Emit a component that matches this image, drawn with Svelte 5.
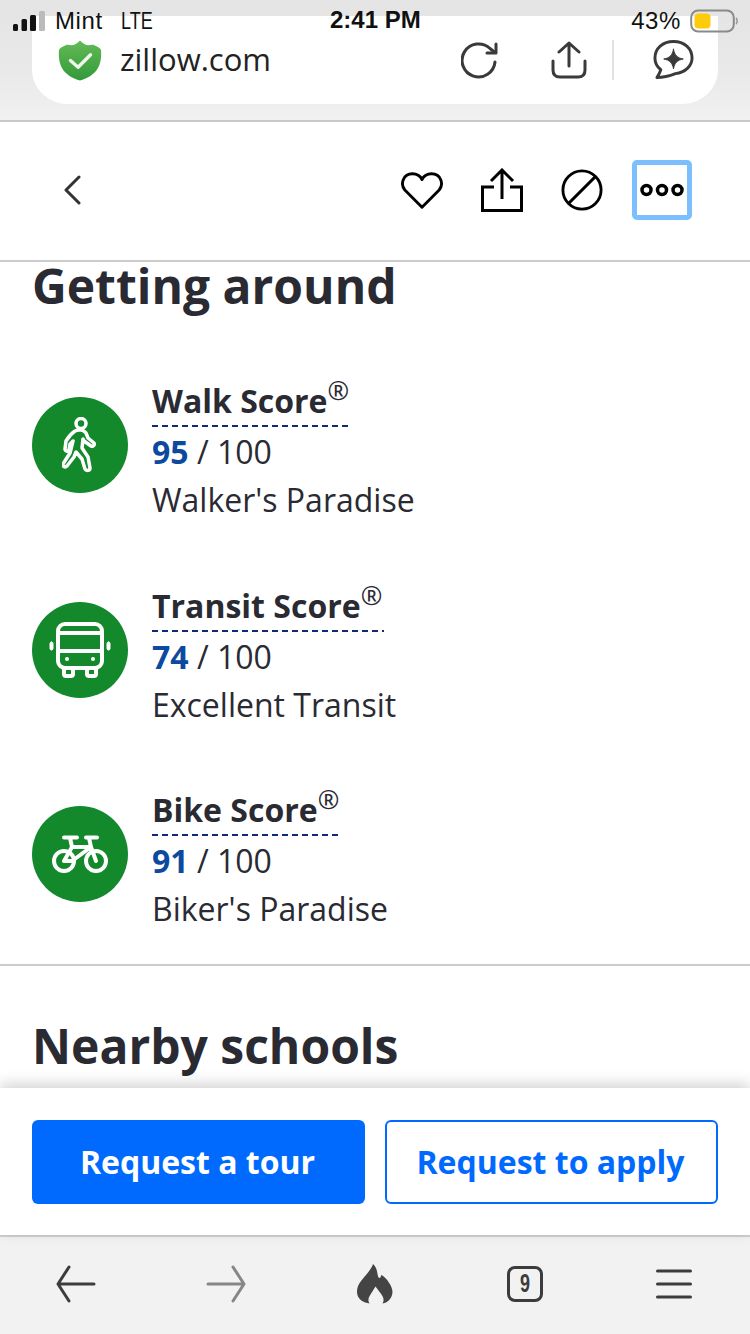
<script>
  const rows = [
    { name: 'Walk Score', score: 95, label: "Walker's Paradise", icon: 'walk' },
    { name: 'Transit Score', score: 74, label: 'Excellent Transit', icon: 'bus' },
    { name: 'Bike Score', score: 91, label: "Biker's Paradise", icon: 'bike' }
  ];
</script>

<div class="page">
  <div class="status">
    <div class="st-left">
      <svg class="signal" width="34" height="22" viewBox="0 0 34 22">
        <rect x="1" y="14" width="5" height="7" rx="1.500" fill="#111" />
        <rect x="9.500" y="9" width="5.500" height="12" rx="1.500" fill="#111" />
        <rect x="18" y="5" width="6" height="16" rx="1.500" fill="#111" />
        <rect x="27" y="1" width="6" height="20" rx="1.500" fill="#bbb" />
      </svg>
      <span class="carrier">Mint</span>
      <span class="lte">LTE</span>
    </div>
    <div class="time">2:41 PM</div>
    <div class="st-right">
      <span>43%</span>
      <svg width="48" height="24" viewBox="0 0 48 24">
        <rect x="1.200" y="1.500" width="42.600" height="21" rx="7" fill="none" stroke="#8a8a8a" stroke-width="2" />
        <rect x="4.500" y="4.500" width="16" height="15" rx="4" fill="#fdcb0a" />
        <path d="M46 9c1.500 1 1.500 5 0 6" fill="none" stroke="#999" stroke-width="1.600" />
      </svg>
    </div>
  </div>

  <header class="browser">
    <div class="pill">
      <svg class="shield" width="44" height="43" viewBox="0 0 46 44">
        <defs>
          <linearGradient id="sh" x1="0" y1="0" x2="0" y2="1">
            <stop offset="0" stop-color="#63bb55" />
            <stop offset="1" stop-color="#33993a" />
          </linearGradient>
        </defs>
        <path d="M23 1c3 3 6 5 9 5 2 0 4-1 6 0 3 1 6 3 7 5 1 15-3 26-22 32C4 37 0 26 1 11c1-2 4-4 7-5 2-1 4 0 6 0 3 0 6-2 9-5z" fill="url(#sh)" />
        <path d="M13 22l8 7 13-13" fill="none" stroke="#f0f7ec" stroke-width="3.500" stroke-linecap="round" stroke-linejoin="round" />
      </svg>
      <span class="domain">zillow.com</span>
      <div class="pill-icons">
        <svg class="reload" width="38" height="38" viewBox="0 0 38 38" fill="none" stroke="#3a3a3a" stroke-width="3" stroke-linecap="round" stroke-linejoin="round">
          <path d="M34 20a16.500 16.500 0 1 1-5-13.500l5 4" />
          <path d="M35 2v9H26" />
        </svg>
        <svg class="upload" width="36" height="38" viewBox="0 0 36 38" fill="none" stroke="#3a3a3a" stroke-width="3" stroke-linecap="round" stroke-linejoin="round">
          <path d="M18 25V2M8 11l10-9 10 9" />
          <path d="M2 20v9q0 7 7 7h18q7 0 7-7v-9" />
        </svg>
        <span class="sep"></span>
        <svg class="spark" width="41" height="42" viewBox="0 0 42 42" fill="none" stroke="#3a3a3a" stroke-width="3" stroke-linecap="round" stroke-linejoin="round">
          <path d="M21 2C10 2 2 9 2 19c0 5 2 9 6 12-1 3-2 5-4 8 7 0 14-2 19-4 10-1 17-8 17-16C40 9 32 2 21 2z" />
          <path d="M21 10c1 6 4 9 10 10-6 1-9 4-10 10-1-6-4-9-10-10 6-1 9-4 10-10z" fill="#3a3a3a" stroke-width="1" />
        </svg>
      </div>
    </div>
  </header>

  <nav class="topnav">
    <svg class="chev" width="20" height="30" viewBox="0 0 20 30" fill="none" stroke="#333" stroke-width="3" stroke-linecap="round" stroke-linejoin="round">
      <path d="M17 2L4 15l13 13" />
    </svg>
    <div class="actions">
      <svg width="42" height="40" viewBox="0 0 44 40" fill="none" stroke="#000" stroke-width="3" stroke-linejoin="round">
        <path d="M22 38L4 20C-1 14 2 3 12 3c4 0 8 2 10 6 2-4 6-6 10-6 10 0 13 11 8 17z" />
      </svg>
      <svg width="42" height="44" viewBox="0 0 42 44" fill="none" stroke="#000" stroke-width="3">
        <path d="M21 31V3M10 13L21 2l11 11" />
        <path d="M13 19H1.500v23.500h39V19H29" />
      </svg>
      <svg width="42" height="44" viewBox="0 0 44 44" fill="none" stroke="#000" stroke-width="3">
        <circle cx="22" cy="22" r="20" />
        <path d="M8 36L36 8" />
      </svg>
      <div class="more">
        <svg width="44" height="14" viewBox="0 0 44 14" fill="none" stroke="#000" stroke-width="3.500">
          <circle cx="6.500" cy="7" r="4.500" />
          <circle cx="22" cy="7" r="4.500" />
          <circle cx="37.500" cy="7" r="4.500" />
        </svg>
      </div>
    </div>
  </nav>

  <main class="content">
    <h2 class="first">Getting around</h2>
    <div class="rows">
      {#each rows as r}
        <div class="row">
          <div class="badge">
            {#if r.icon === 'walk'}
              <svg width="36" height="56" viewBox="0 0 36 56" fill="none" stroke="#fff" stroke-width="3.500" stroke-linejoin="round" stroke-linecap="round">
                <circle cx="19" cy="6.500" r="5" />
                <path d="M13 14c4-2 9-1 11 2l2 5 6 5c1 2-1 4-3 3l-7-5-1-2-1 9 6 9 2 11c0 3-4 3-5 1l-3-10-6-7-2 5-7 9c-2 2-5 0-4-2l7-11 3-12-3 3-1 6c-1 2-4 1-4-1l1-8c3-5 6-8 9-10z" />
              </svg>
            {:else if r.icon === 'bus'}
              <svg width="62" height="56" viewBox="0 0 62 56" fill="none" stroke="#fff" stroke-width="4" stroke-linejoin="round" stroke-linecap="round">
                <rect x="9" y="2" width="44" height="44" rx="7" />
                <path d="M9 11h44M9 29h44" />
                <path d="M15 46v6q0 2 2 2h5q2 0 2-2v-6M38 46v6q0 2 2 2h5q2 0 2-2v-6" />
                <rect x="1" y="20" width="3" height="8" rx="1.500" fill="#fff" stroke-width="1" />
                <rect x="58" y="20" width="3" height="8" rx="1.500" fill="#fff" stroke-width="1" />
                <circle cx="18" cy="37" r="2" fill="#fff" stroke="none" />
                <circle cx="44" cy="37" r="2" fill="#fff" stroke="none" />
              </svg>
            {:else}
              <svg width="56" height="38" viewBox="0 0 56 38" fill="none" stroke="#fff" stroke-width="4" stroke-linejoin="round" stroke-linecap="round">
                <circle cx="12" cy="26" r="10" />
                <circle cx="44" cy="26" r="10" />
                <path d="M12 26l8-14h19l5 14M20 12l-2-9M12 2.500h13M34 2.500h11M39 12l-2-9M20 26l19-14M12 26h8" />
              </svg>
            {/if}
          </div>
          <div class="info">
            <div class="name-wrap"><span class="name">{r.name}<sup>®</sup></span></div>
            <div class="score"><b>{r.score}</b> / 100</div>
            <div class="label">{r.label}</div>
          </div>
        </div>
      {/each}
    </div>
    <hr />
    <h2 class="second">Nearby schools</h2>
  </main>

  <div class="cta">
    <button class="primary">Request a tour</button>
    <button class="outline">Request to apply</button>
  </div>

  <footer class="toolbar">
    <svg width="40" height="38" viewBox="0 0 40 38" fill="none" stroke="#3c3c3c" stroke-width="3" stroke-linecap="round" stroke-linejoin="round">
      <path d="M38 19H2M13 2L2 19l11 17" />
    </svg>
    <svg width="40" height="38" viewBox="0 0 40 38" fill="none" stroke="#868686" stroke-width="3" stroke-linecap="round" stroke-linejoin="round">
      <path d="M2 19h36M27 2l11 17-11 17" />
    </svg>
    <svg width="38" height="40" viewBox="0 0 38 40" fill="#444">
      <path d="M17 0c3 3 4 6 4.500 10 .3 2 1 4 2 4 1.500 0 1.500-3 2-3 5 3 11 11 11 17 0 5-4 10-8 11l-2 .5c2-3 1-6-1-9l-6-8-5 8c-2 3-3 6-1 9l-2-.5C5 38 1 33 1 28c0-8 5-12 9-17 3-4 6-7 7-11z" />
    </svg>
    <div class="tabs"><span>9</span></div>
    <svg class="menu" width="36" height="30" viewBox="0 0 36 30" fill="none" stroke="#3c3c3c" stroke-width="3" stroke-linecap="round">
      <path d="M1.500 2h33M1.500 15h33M1.500 28h33" />
    </svg>
  </footer>
</div>

<style>
  :global(body) { margin: 0; background: #fff; }
  .page {
    position: relative;
    width: 750px;
    height: 1334px;
    overflow: hidden;
    display: flex;
    flex-direction: column;
    font-family: "Open Sans", "Liberation Sans", sans-serif;
    color: #2a2a33;
    background: #fff;
  }
  .status {
    position: absolute;
    inset: 0 0 auto 0;
    height: 42px;
    z-index: 3;
    font-size: 24px;
    color: #111;
  }
  .st-left { position: absolute; left: 12px; top: 7px; display: flex; align-items: center; }
  .signal { margin-right: 9px; }
  .carrier { font-family: "Liberation Sans", sans-serif; font-size: 24px; letter-spacing: .6px; margin-right: 18px; }
  .lte { font-family: "Liberation Sans", sans-serif; font-size: 24px; display: inline-block; transform: scaleX(.75); transform-origin: left center; }
  .time { position: absolute; left: 330px; top: 6px; font-family: "Liberation Sans", sans-serif; font-weight: 700; font-size: 24px; }
  .st-right { position: absolute; right: 12px; top: 7px; display: flex; align-items: center; gap: 9px; font-family: "Liberation Sans", sans-serif; font-size: 24px; letter-spacing: .6px; }
  .browser {
    height: 122px;
    box-sizing: border-box;
    padding: 16px 32px 0;
    flex: none;
    background: linear-gradient(#e4e4e4, #e9e9e9 60%, #f1f1f1);
    border-bottom: 2px solid #c8c8c8;
  }
  .pill {
    height: 88px;
    background: #fff;
    border-radius: 0 0 36px 36px / 0 0 34px 34px;
    display: flex;
    align-items: center;
    padding-left: 26px;
    box-sizing: border-box;
  }
  .domain {
    margin-left: 18px;
    margin-top: -2px;
    font-size: 31px;
    color: #222;
  }
  .pill-icons { margin-left: auto; display: flex; align-items: center; padding-right: 24px; }
  .reload { margin-right: 52px; margin-top: 2px; }
  .upload { margin-right: 25px; }
  .sep { width: 2px; height: 40px; background: #e2e2e2; margin-right: 39px; }
  .topnav {
    height: 140px;
    box-sizing: border-box;
    flex: none;
    display: flex;
    align-items: center;
    padding: 0 58px 2px 62px;
    border-bottom: 2px solid #ccc;
    justify-content: space-between;
  }
  .actions { display: flex; align-items: center; gap: 38px; }
  .more {
    width: 60px;
    height: 60px;
    box-sizing: border-box;
    border: 5px solid #7cbfff;
    border-radius: 5px;
    display: flex;
    align-items: center;
    justify-content: center;
    margin-left: -9px;
  }
  .content { flex: 1; min-height: 0; }
  h2 {
    margin: 0;
    font-size: 48px;
    font-weight: 700;
    line-height: 52px;
    color: #2a2a33;
    padding-left: 32px;
  }
  .first { margin-top: -2px; }
  .rows { margin-top: 61px; display: flex; flex-direction: column; gap: 60px; padding-left: 32px; }
  .row { display: flex; align-items: center; height: 144.500px; }
  .badge {
    width: 96px;
    height: 96px;
    border-radius: 50%;
    background: #13892c;
    display: flex;
    align-items: center;
    justify-content: center;
    flex: none;
  }
  .info { align-self: flex-start; margin: 6px 0 0 24px; font-size: 32px; line-height: 48px; color: #2a2a33; }
  .name-wrap { height: 51px; margin-top: -2px; }
  .name {
    display: inline-block;
    font-weight: 700;
    line-height: 40px;
    padding: 0 2px 6px 0;
    background: repeating-linear-gradient(90deg, #0f2a78 0 6px, transparent 6px 10px) left bottom / 100% 2px no-repeat;
  }
  sup { font-size: 26px; font-weight: 500; line-height: 0; vertical-align: 13px; }
  .score b { color: #0d4a9f; font-weight: 700; }
  hr { margin: 37px 0 0; border: 0; height: 2px; background: #ccc; }
  .second { margin-top: 54px; }
  .cta {
    position: relative;
    height: 147px;
    flex: none;
    display: grid;
    grid-template-columns: 1fr 1fr;
    gap: 20px;
    padding: 32px 32px 0;
    box-sizing: border-box;
    background: #fff;
    box-shadow: 0 -4px 14px rgba(0,0,0,.18);
    align-items: start;
  }
  button {
    height: 84px;
    border-radius: 6px;
    font-family: "Open Sans", sans-serif;
    font-size: 32px;
    font-weight: 700;
    box-sizing: border-box;
    padding: 0 2px 2px 0;
  }
  .primary { background: #006aff; color: #fff; border: 0; }
  .outline { background: #fff; color: #006aff; border: 2px solid #006aff; }
  .toolbar {
    height: 99px;
    flex: none;
    box-sizing: border-box;
    background: #f2f2f2;
    border-top: 2px solid #d0d0d0;
    display: flex;
    align-items: center;
    gap: 110px;
    padding: 0 0 4px 56px;
  }
  .tabs {
    width: 36px;
    height: 36px;
    box-sizing: border-box;
    border: 3px solid #3c3c3c;
    border-radius: 8px;
    display: flex;
    align-items: center;
    justify-content: center;
    margin-left: 3px;
    font-family: "Liberation Sans", sans-serif;
    font-weight: 700;
    font-size: 25px;
    color: #3c3c3c;
  }
  .tabs span { transform: scaleX(.72); }
  .menu { margin-left: 3px; }
</style>
